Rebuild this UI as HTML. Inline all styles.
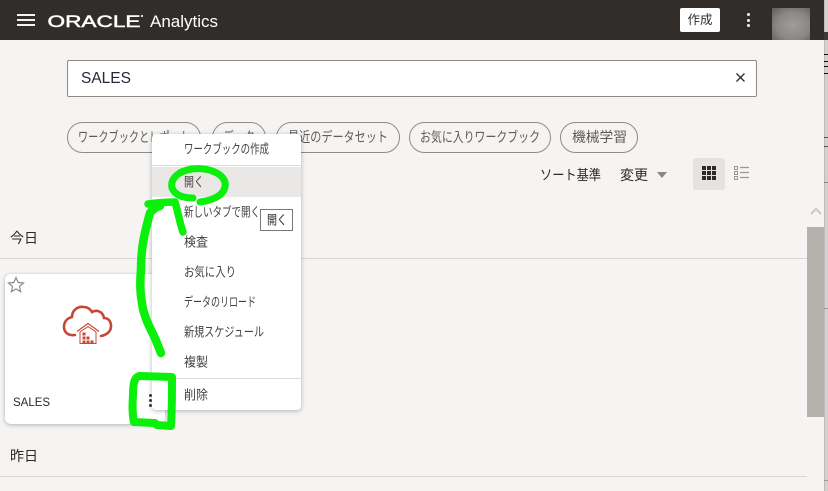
<!DOCTYPE html>
<html lang="ja">
<head>
<meta charset="utf-8">
<style>
html,body{margin:0;padding:0;width:828px;height:491px;overflow:hidden;background:#f5f4f2;}
body{position:relative;font-family:"Liberation Sans","Noto Sans CJK JP",sans-serif;color:#2b2825;}
.a{position:absolute;white-space:nowrap;}
.chip{position:absolute;top:122px;height:31px;box-sizing:border-box;border:1px solid #8f8b87;border-radius:15.5px;}
svg text{font-family:"Liberation Sans","Noto Sans CJK JP",sans-serif;}
.ct text{font-size:14px;fill:#5f5b57;}
.mt text{font-size:13px;fill:#45413e;}
</style>
</head>
<body>
<!-- header -->
<div class="a" style="left:0;top:0;width:824px;height:40px;background:#312d2a;"></div>
<div class="a" style="left:17px;top:14px;width:18px;height:2px;background:#f5f4f2;"></div>
<div class="a" style="left:17px;top:19px;width:18px;height:2px;background:#f5f4f2;"></div>
<div class="a" style="left:17px;top:24px;width:18px;height:2px;background:#f5f4f2;"></div>
<svg class="a" style="left:47px;top:12px;" width="96" height="18" viewBox="0 0 96 18">
  <text x="0.500" y="15" font-size="16.500" fill="#fff" stroke="#fff" stroke-width="0.500" textLength="93" lengthAdjust="spacingAndGlyphs">ORACLE</text>
</svg>
<div class="a" style="left:141px;top:15px;width:2px;height:2px;background:#ddd;"></div>
<div class="a" style="left:150px;top:12px;font-size:17px;line-height:20px;color:#fff;">Analytics</div>
<div class="a" style="left:680px;top:8px;width:40px;height:24px;background:#fff;border-radius:2px;font-size:12.500px;line-height:25px;text-align:center;color:#312d2a;">作成</div>
<div class="a" style="left:747px;top:13px;width:3px;height:3px;border-radius:50%;background:#f5f4f2;"></div>
<div class="a" style="left:747px;top:19px;width:3px;height:3px;border-radius:50%;background:#f5f4f2;"></div>
<div class="a" style="left:747px;top:24px;width:3px;height:3px;border-radius:50%;background:#f5f4f2;"></div>
<div class="a" style="left:772px;top:8px;width:38px;height:32px;background:radial-gradient(ellipse at 55% 55%,#a09e9a 0%,#8a8885 55%,#5e5c59 100%);"></div>

<!-- right edge strip -->
<div class="a" style="left:825px;top:0;width:3px;height:491px;background:#d4d3d1;"></div>
<div class="a" style="left:824px;top:0;width:1px;height:491px;background:#bdbcba;"></div>
<div class="a" style="left:824px;top:32px;width:4px;height:8px;background:#3d3a38;"></div>
<div class="a" style="left:824px;top:54px;width:4px;height:1px;background:#111;"></div>
<div class="a" style="left:824px;top:61px;width:4px;height:1px;background:#111;"></div>
<div class="a" style="left:824px;top:66px;width:4px;height:1px;background:#111;"></div>
<div class="a" style="left:824px;top:73px;width:4px;height:1px;background:#111;"></div>
<div class="a" style="left:824px;top:137px;width:4px;height:1px;background:#555;"></div>
<div class="a" style="left:824px;top:146px;width:4px;height:1px;background:#555;"></div>
<div class="a" style="left:824px;top:182px;width:4px;height:1px;background:#888;"></div>
<div class="a" style="left:824px;top:308px;width:4px;height:1px;background:#999;"></div>
<div class="a" style="left:824px;top:480px;width:4px;height:1px;background:#999;"></div>

<!-- search -->
<div class="a" style="left:67px;top:60px;width:690px;height:37px;box-sizing:border-box;background:#fff;border:1px solid #8d8985;border-radius:2px;"></div>
<div class="a" style="left:81px;top:69px;font-size:15.500px;line-height:20px;color:#252a3a;">SALES</div>
<svg class="a" style="left:735px;top:72px;" width="11" height="11" viewBox="0 0 11 11"><path d="M1.500 1.500L9.500 9.500M9.500 1.500L1.500 9.500" stroke="#312d2a" stroke-width="1.300" fill="none"/></svg>

<!-- chips -->
<div class="chip" style="left:67px;width:134px;"></div>
<div class="chip" style="left:212px;width:54px;"></div>
<div class="chip" style="left:276px;width:124px;"></div>
<div class="chip" style="left:409px;width:142px;"></div>
<div class="chip" style="left:560px;width:78px;"></div>
<svg class="a ct" style="left:0;top:0;" width="828" height="200">
  <text x="78" y="142" textLength="112" lengthAdjust="spacingAndGlyphs">ワークブックとレポート</text>
  <text x="223" y="142" textLength="32" lengthAdjust="spacingAndGlyphs">データ</text>
  <text x="288" y="142" textLength="100" lengthAdjust="spacingAndGlyphs">最近のデータセット</text>
  <text x="420" y="142" textLength="120" lengthAdjust="spacingAndGlyphs">お気に入りワークブック</text>
  <text x="572" y="142" textLength="55" lengthAdjust="spacingAndGlyphs">機械学習</text>
</svg>

<!-- sort -->
<svg class="a" style="left:0;top:0;" width="828" height="200">
  <text x="540" y="180" font-size="14" fill="#2b2825" textLength="61" lengthAdjust="spacingAndGlyphs">ソート基準</text>
  <text x="620" y="180" font-size="14" fill="#2b2825" textLength="28" lengthAdjust="spacingAndGlyphs">変更</text>
</svg>
<div class="a" style="left:657px;top:172px;width:0;height:0;border-left:5px solid transparent;border-right:5px solid transparent;border-top:6px solid #8a8784;"></div>
<div class="a" style="left:693px;top:158px;width:32px;height:32px;background:#e4e3e1;border-radius:3px;"></div>
<svg class="a" style="left:702px;top:166px;" width="14" height="14" viewBox="0 0 14 14" fill="#2e2a27">
  <rect x="0" y="0" width="4" height="4"/><rect x="5" y="0" width="4" height="4"/><rect x="10" y="0" width="4" height="4"/>
  <rect x="0" y="5" width="4" height="4"/><rect x="5" y="5" width="4" height="4"/><rect x="10" y="5" width="4" height="4"/>
  <rect x="0" y="10" width="4" height="4"/><rect x="5" y="10" width="4" height="4"/><rect x="10" y="10" width="4" height="4"/>
</svg>
<svg class="a" style="left:734px;top:166px;" width="15" height="14" viewBox="0 0 15 14" fill="none" stroke="#9a9794" stroke-width="1">
  <rect x=".5" y=".5" width="3" height="3"/><rect x=".5" y="5.500" width="3" height="3"/><rect x=".5" y="10.500" width="3" height="3"/>
  <path d="M6 1.500H15M6 6.500H15M6 11.500H15" stroke-width="1.300"/>
</svg>

<!-- scrollbar -->
<svg class="a" style="left:808px;top:205px;" width="16" height="12" viewBox="0 0 16 12"><path d="M3 9L8 4L13 9" stroke="#c9c7c4" stroke-width="2" fill="none"/></svg>
<div class="a" style="left:807px;top:227px;width:17px;height:190px;background:#b5b2ae;"></div>

<!-- sections -->
<div class="a" style="left:10px;top:229px;font-size:14px;line-height:18px;color:#2b2825;">今日</div>
<div class="a" style="left:0;top:258px;width:807px;height:1px;background:#d8d6d3;"></div>
<div class="a" style="left:10px;top:447px;font-size:14px;line-height:18px;color:#2b2825;">昨日</div>
<div class="a" style="left:0;top:476px;width:807px;height:1px;background:#d8d6d3;"></div>

<!-- card -->
<div class="a" style="left:5px;top:274px;width:160px;height:150px;background:#fff;border-radius:6px;box-shadow:0 1px 4px rgba(0,0,0,.28);"></div>
<svg class="a" style="left:7px;top:276px;" width="18" height="17" viewBox="0 0 18 17"><path d="M9 1.500L11.200 6.500L16.500 7L12.500 10.500L13.700 15.700L9 13L4.300 15.700L5.500 10.500L1.500 7L6.800 6.500Z" fill="none" stroke="#8f8c89" stroke-width="1.200"/></svg>
<svg class="a" style="left:0;top:0;" width="200" height="360" fill="none">
  <path d="M75 335C68 336 64 332 64 327C64 321 68 318 72 317C72 310 78 306 84 307C88 307 91 310 92 312C97 309 103 312 104 318C109 318 111 322 111 326C111 332 106 335 101 336" stroke="#c74634" stroke-width="2.600" stroke-linecap="round"/>
  <path d="M77 331.500L88 323.500L99 331.500" stroke="#c74634" stroke-width="1.200"/>
  <path d="M80 332L88 326.500L96 332V343.500H80Z" stroke="#c74634" stroke-width="1"/>
  <path d="M82.500 332.500h3v3h-3zM82.500 336.500h3v3h-3zM82.500 340.500h3v3h-3zM86.500 336.500h3v3h-3zM86.500 340.500h3v3h-3zM90.500 340.500h3v3h-3z" fill="#c74634"/>
</svg>
<div class="a" style="left:13px;top:395px;font-size:11.500px;line-height:17px;color:#2b2825;">SALES</div>

<!-- menu -->
<div class="a" style="left:152px;top:134px;width:149px;height:276px;background:#fff;border-radius:4px;box-shadow:0 1px 5px rgba(0,0,0,.28);"></div>
<div class="a" style="left:152px;top:165px;width:149px;height:1px;background:#dedcda;"></div>
<div class="a" style="left:152px;top:167px;width:149px;height:30px;background:#e9e8e6;"></div>
<div class="a" style="left:152px;top:378px;width:149px;height:1px;background:#dedcda;"></div>
<svg class="a mt" style="left:0;top:0;" width="828" height="491">
  <text x="184" y="153.500" textLength="85" lengthAdjust="spacingAndGlyphs">ワークブックの作成</text>
  <text x="184" y="186.500" textLength="20" lengthAdjust="spacingAndGlyphs">開く</text>
  <text x="184" y="216.500" textLength="76" lengthAdjust="spacingAndGlyphs">新しいタブで開く</text>
  <text x="184" y="246.500" textLength="24" lengthAdjust="spacingAndGlyphs">検査</text>
  <text x="184" y="276.500" textLength="52" lengthAdjust="spacingAndGlyphs">お気に入り</text>
  <text x="184" y="306.500" textLength="72" lengthAdjust="spacingAndGlyphs">データのリロード</text>
  <text x="184" y="336.500" textLength="80" lengthAdjust="spacingAndGlyphs">新規スケジュール</text>
  <text x="184" y="366.500" textLength="24" lengthAdjust="spacingAndGlyphs">複製</text>
  <text x="184" y="399.500" textLength="24" lengthAdjust="spacingAndGlyphs">削除</text>
</svg>

<!-- tooltip -->
<div class="a" style="left:260px;top:209px;width:33px;height:22px;box-sizing:border-box;background:#fff;border:1px solid #7a7774;"></div>
<svg class="a" style="left:0;top:0;" width="828" height="300"><text x="267" y="224.500" font-size="13" fill="#2b2825" textLength="20" lengthAdjust="spacingAndGlyphs">開く</text></svg>

<!-- kebab on card -->
<div class="a" style="left:149px;top:394px;width:3px;height:3px;border-radius:50%;background:#3a3633;"></div>
<div class="a" style="left:149px;top:399px;width:3px;height:3px;border-radius:50%;background:#3a3633;"></div>
<div class="a" style="left:149px;top:404px;width:3px;height:3px;border-radius:50%;background:#3a3633;"></div>

<!-- green annotations -->
<svg class="a" style="left:0;top:0;" width="828" height="491" viewBox="0 0 828 491" fill="none" stroke="#0bf00b" stroke-linecap="round" stroke-linejoin="round">
  <path d="M161 353C158 346 155 337 151 330C146 320 143 312 142 303C140 292 140 280 141 270C141 258 142 247 144 237C146 228 148 220 150 213C152 210 156 207 160 206" stroke-width="8.500"/>
  <path d="M148 204C156 203 167 202 175 202C178 212 180 224 183 232" stroke-width="7.500"/>
  <path d="M193 198C183 198 175 195 172 188C170 179 178 171 192 169C208 167 222 173 225 182C227 193 216 200 200 202" stroke-width="7"/>
  <path d="M172 377L140 376C134 377 133 384 133 395C132 408 133 418 134 422L155 423L157 425L171 426C172 410 172 392 172 377Z" stroke-width="8"/>
</svg>
</body>
</html>
